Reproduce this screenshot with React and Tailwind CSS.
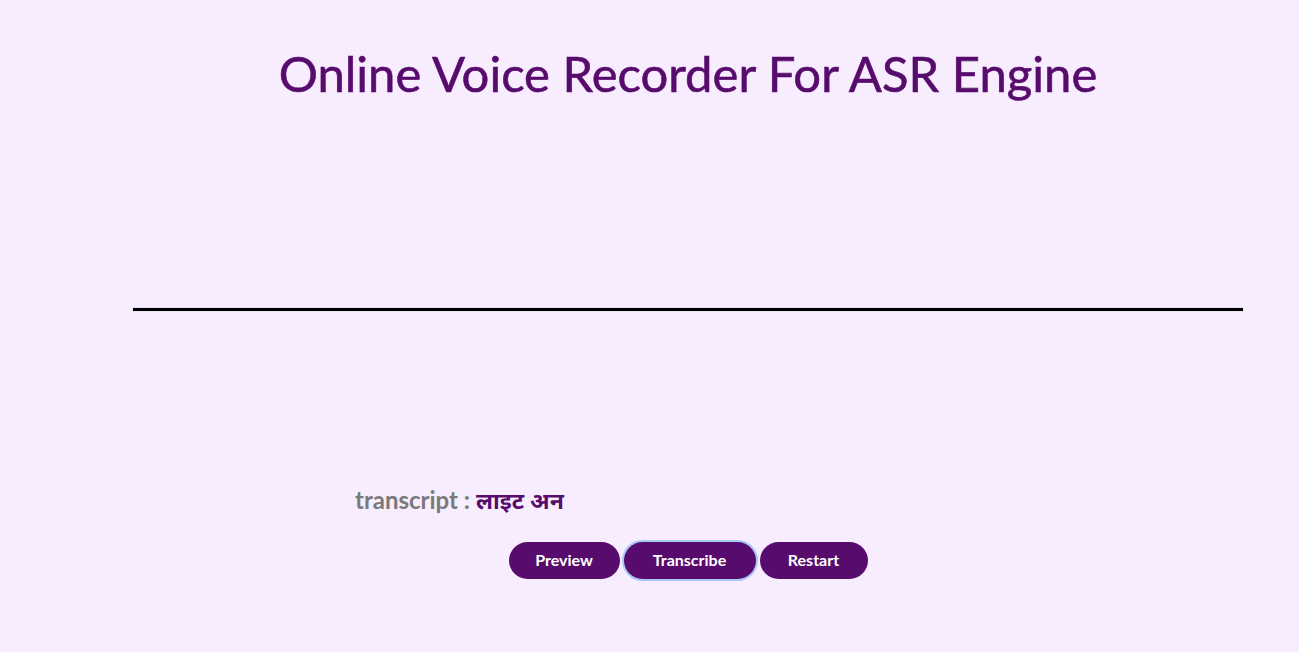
export default function App() {
  return (
    <div
      className="min-h-[652px] w-full bg-[#f7edfe] pl-[77px]"
      style={{ fontFamily: "Lato, 'Noto Sans', sans-serif" }}
    >
      {/* title */}
      <h1 className="pt-[47px] text-center text-[49px] font-normal leading-[52px] text-[#570b6c] [-webkit-text-stroke:0.6px_#570b6c]">
        Online Voice Recorder For ASR Engine
      </h1>

      {/* waveform canvas */}
      <div className="mx-auto mt-[195px] flex h-[30px] w-[1110px] items-center">
        <div className="h-[3px] w-full bg-black shadow-[0_0_1px_rgba(0,0,0,0.5)]" />
      </div>

      {/* transcript */}
      <div className="mx-auto mt-[158px] w-[666px]">
        <p className="flex items-baseline gap-[6px] text-[24px] font-bold text-[#7a7a7a]">
          transcript :
          <span
            className="text-[23px] font-bold text-[#570b6c]"
            style={{ fontFamily: "'Noto Sans Devanagari', 'Noto Sans', Lato, sans-serif" }}
          >
            लाइट अन
          </span>
        </p>
      </div>

      {/* actions */}
      <div className="mt-[21px] flex justify-center gap-[4px]">
        <button className="h-[37px] w-[111px] rounded-full bg-[#570b6c] text-[16px] font-bold text-white">
          Preview
        </button>
        <button className="h-[37px] w-[132px] rounded-full bg-[#570b6c] text-[16px] font-bold text-white ring-2 ring-[#a9c7f7]">
          Transcribe
        </button>
        <button className="h-[37px] w-[108px] rounded-full bg-[#570b6c] text-[16px] font-bold text-white">
          Restart
        </button>
      </div>
    </div>
  );
}
